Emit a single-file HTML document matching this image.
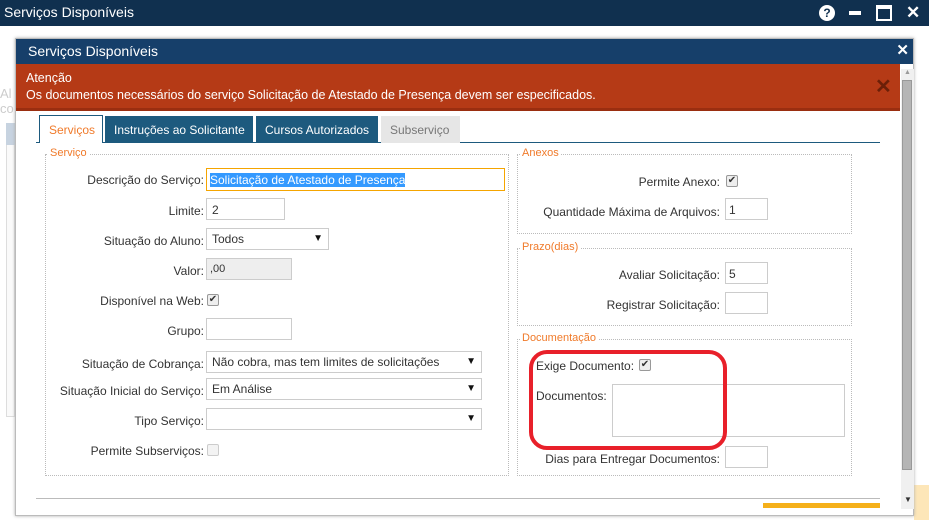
<!DOCTYPE html>
<html><head><meta charset="utf-8"><style>
*{box-sizing:border-box;margin:0;padding:0}
body{width:929px;height:520px;overflow:hidden;background:#fff;font-family:"Liberation Sans",sans-serif;font-size:12px;color:#333;position:relative}
.a{position:absolute}
.top{left:0;top:0;width:929px;height:26px;background:#10304f;color:#fff;font-size:14px;padding:4px 0 0 4px}
.modal{left:15px;top:38px;width:899px;height:478px;background:#fff;border:1px solid #bbb;box-shadow:0 0 3px #aaa}
.lbl{text-align:right;font-size:12px;color:#333;white-space:nowrap}
.in{background:#fff;border:1px solid #ccc;height:22px}
.sel{background:#fff;border:1px solid #ccc;height:22px;padding:3px 5px;font-size:12px;white-space:nowrap}
.sel:after{content:"▼";position:absolute;right:5px;top:4px;font-size:10px;color:#111}
.fs{border:1px dotted #bbb}
.lg{background:#fff;color:#f07a2a;font-size:11px;padding:0 2px}
.cb{width:12px;height:12px;border:1px solid #999;border-radius:2px;background:#eee;font-size:10px;line-height:10px;text-align:center;color:#333}
.tab{white-space:nowrap;font-size:12px;height:27px;padding:7px 0 0 9px}
</style></head><body>
<div class="a top">Serviços Disponíveis</div>
<div class="a" style="left:819px;top:5px;width:16px;height:16px;border-radius:50%;background:#fff;color:#10304f;font-weight:bold;font-size:12px;text-align:center;line-height:16px">?</div>
<div class="a" style="left:849px;top:11px;width:12px;height:4px;background:#fff"></div>
<div class="a" style="left:876px;top:5px;width:16px;height:16px;border:2px solid #fff;border-top-width:4px"></div>
<div class="a" style="left:906px;top:3px;color:#fff;font-size:17px;font-weight:bold">✕</div>
<div class="a" style="left:0;top:86px;color:#ccc;font-size:13px">Al<br>co</div>
<div class="a" style="left:6px;top:123px;width:9px;height:294px;border:1px solid #ddd;background:#fafafa"></div>
<div class="a" style="left:6px;top:123px;width:9px;height:22px;background:#c7d3e0"></div>
<div class="a" style="left:914px;top:485px;width:15px;height:35px;background:#fde6b8"></div>
<div class="a modal">
 <div class="a" style="left:0;top:0;width:897px;height:25px;background:#163f6a;color:#fff;font-size:14px;padding:4px 0 0 12px">Serviços Disponíveis</div>
 <div class="a" style="right:4px;top:2px;color:#fff;font-size:15px;font-weight:bold">✕</div>
 <div class="a" style="left:0;top:25px;width:884px;height:47px;background:#b53a16;border-bottom:3px solid #9a2e10;color:#fff;font-size:12.5px;padding:6px 0 0 10px;line-height:17px">Atenção<br>Os documentos necessários do serviço Solicitação de Atestado de Presença devem ser especificados.</div>
 <div class="a" style="left:859px;top:35px;color:#6b1f08;font-size:20px;font-weight:bold">✕</div>
 <div class="a" style="left:885px;top:30px;width:13px;height:440px;background:#f0f0f0"></div>
 <div class="a" style="left:886px;top:41px;width:10px;height:390px;background:#b5b5b5;border:1px solid #999"></div>
 <div class="a" style="left:888px;top:30px;font-size:7px;color:#999">▲</div>
 <div class="a" style="left:888px;top:456px;font-size:8px;color:#333">▼</div>
 <div class="a" style="left:20px;top:103px;width:844px;height:1px;background:#1d5a7e"></div>
 <div class="a tab" style="left:23px;top:76px;width:64px;height:28px;background:#fff;border:1px solid #1d5a7e;border-bottom:none;color:#f07a2a;padding:7px 0 0 9px">Serviços</div>
 <div class="a tab" style="left:89px;top:77px;width:148px;background:#1d5a7e;color:#fff">Instruções ao Solicitante</div>
 <div class="a tab" style="left:240px;top:77px;width:122px;background:#1d5a7e;color:#fff">Cursos Autorizados</div>
 <div class="a tab" style="left:365px;top:77px;width:79px;background:#e6e6e6;color:#777">Subserviço</div>
 <div class="a fs" style="left:29px;top:115px;width:464px;height:322px"></div>
 <div class="a lg" style="left:32px;top:108px">Serviço</div>
 <div class="a lbl" style="left:20px;top:134px;width:168px">Descrição do Serviço:</div>
 <div class="a" style="left:190px;top:129px;width:299px;height:23px;border:1px solid #f5a500;padding:4px 3px;white-space:nowrap"><span style="background:#3399ff;color:#fff">Solicitação de Atestado de Presença</span></div>
 <div class="a lbl" style="left:20px;top:165px;width:168px">Limite:</div>
 <div class="a in" style="left:190px;top:159px;width:79px;padding:4px 5px">2</div>
 <div class="a lbl" style="left:20px;top:195px;width:168px">Situação do Aluno:</div>
 <div class="a sel" style="left:190px;top:189px;width:123px">Todos</div>
 <div class="a lbl" style="left:20px;top:225px;width:168px">Valor:</div>
 <div class="a in" style="left:190px;top:219px;width:86px;background:#eee;padding:4px 3px;font-size:11px">,00</div>
 <div class="a lbl" style="left:20px;top:255px;width:168px">Disponível na Web:</div>
 <div class="a cb" style="left:191px;top:255px">✔</div>
 <div class="a lbl" style="left:20px;top:285px;width:168px">Grupo:</div>
 <div class="a in" style="left:190px;top:279px;width:86px"></div>
 <div class="a lbl" style="left:20px;top:318px;width:168px">Situação de Cobrança:</div>
 <div class="a sel" style="left:190px;top:312px;width:276px">Não cobra, mas tem limites de solicitações</div>
 <div class="a lbl" style="left:20px;top:345px;width:168px">Situação Inicial do Serviço:</div>
 <div class="a sel" style="left:190px;top:339px;width:276px">Em Análise</div>
 <div class="a lbl" style="left:20px;top:375px;width:168px">Tipo Serviço:</div>
 <div class="a sel" style="left:190px;top:369px;width:276px"></div>
 <div class="a lbl" style="left:20px;top:405px;width:168px">Permite Subserviços:</div>
 <div class="a cb" style="left:191px;top:405px;background:#f3f3f3;border-color:#ccc"></div>
 <div class="a fs" style="left:501px;top:115px;width:335px;height:80px"></div>
 <div class="a lg" style="left:504px;top:108px">Anexos</div>
 <div class="a lbl" style="left:510px;top:136px;width:194px">Permite Anexo:</div>
 <div class="a cb" style="left:710px;top:136px">✔</div>
 <div class="a lbl" style="left:510px;top:166px;width:194px">Quantidade Máxima de Arquivos:</div>
 <div class="a in" style="left:709px;top:159px;width:43px;padding:4px 3px">1</div>
 <div class="a fs" style="left:501px;top:209px;width:335px;height:78px"></div>
 <div class="a lg" style="left:504px;top:202px">Prazo(dias)</div>
 <div class="a lbl" style="left:510px;top:229px;width:194px">Avaliar Solicitação:</div>
 <div class="a in" style="left:709px;top:223px;width:43px;padding:4px 3px">5</div>
 <div class="a lbl" style="left:510px;top:259px;width:194px">Registrar Solicitação:</div>
 <div class="a in" style="left:709px;top:253px;width:43px"></div>
 <div class="a fs" style="left:501px;top:300px;width:335px;height:137px"></div>
 <div class="a lg" style="left:504px;top:293px">Documentação</div>
 <div class="a" style="left:520px;top:320px">Exige Documento:</div>
 <div class="a cb" style="left:623px;top:320px">✔</div>
 <div class="a" style="left:520px;top:350px">Documentos:</div>
 <div class="a in" style="left:596px;top:345px;width:233px;height:53px"></div>
 <div class="a lbl" style="left:510px;top:413px;width:194px">Dias para Entregar Documentos:</div>
 <div class="a in" style="left:709px;top:407px;width:43px"></div>
 <div class="a" style="left:513px;top:311px;width:198px;height:100px;border:4px solid #e8202a;border-radius:18px"></div>
 <div class="a" style="left:20px;top:459px;width:844px;height:1px;background:#bbb"></div>
 <div class="a" style="left:747px;top:464px;width:117px;height:5px;background:#f5b01a"></div>
</div>
</body></html>
